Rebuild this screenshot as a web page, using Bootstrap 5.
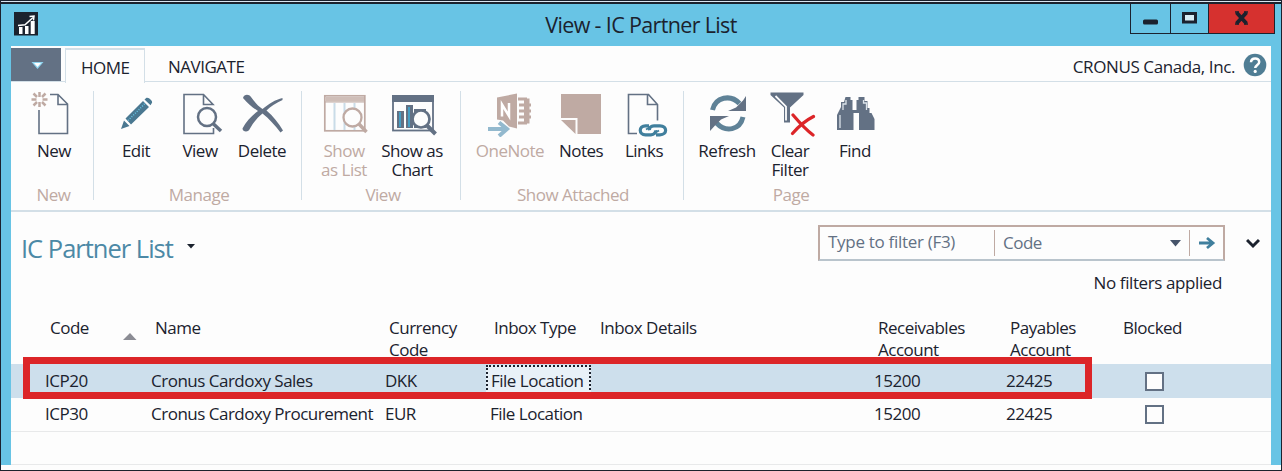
<!DOCTYPE html>
<html lang="en">
<head>
<meta charset="utf-8">
<meta name="viewport" content="width=device-width, initial-scale=1">
<title>View - IC Partner List</title>
<link rel="stylesheet" href="https://cdn.jsdelivr.net/npm/bootstrap@5.3.0/dist/css/bootstrap.min.css">
<style>
:root{--ink:#1b222e;--slate:#637184;--dim:#bfaaa3;--sky:#68c4e5;--rule:#d3dfe7;--pick:#cddfec;--alert:#dc2528}
body{font-family:"Open Sans","Noto Sans",sans-serif;font-size:17px;line-height:20px;letter-spacing:-.5px;color:var(--ink);background:#fdfdfd;overflow:hidden}
.window{height:471px;border:1px solid var(--ink);border-bottom-width:1px}
.topline{height:3px;background:#d8e4f0;border-bottom:2px solid var(--ink);flex:none}
.titlebar{height:42px;background:var(--sky);flex:none}
.titlebar h1{font-size:21.5px;line-height:41px;letter-spacing:-.65px;padding-right:0}
.logo{left:13px;top:8px}
.controls{right:6px;top:0;height:30px;border:1px solid var(--ink);border-top:0}
.controls button{border:0;background:none;padding:0;border-left:1px solid var(--ink);height:29px;display:block}
.controls button:first-child{border-left:0}
.controls .quit{background:#d6312f}
.body-frame{border:solid var(--sky);border-width:0 10px;height:419px;flex:none}
.tabs{height:36px;border-bottom:1px solid var(--rule)}
.tabs .app-menu{width:50px;height:33px;margin-top:2px;background:var(--slate);border:0;padding:0}
.tab-item{height:34px;line-height:38px;margin-top:2px}
.tab-item.current{width:80px;margin-left:4px;height:35px;border:1px solid var(--rule);border-width:2px 1px 0;background:#fdfdfd;line-height:35px;padding-left:15px}
.ribbon{height:130px;border-bottom:2px solid var(--rule);padding-top:9px}
.group{height:109px;border-right:1px solid var(--rule);position:relative}
.group:last-child{border:0}
.tool{border:0;background:none;padding:0;color:inherit;letter-spacing:inherit;line-height:19px;display:flex;flex-direction:column;align-items:center;height:93px;flex:none;white-space:nowrap}
.tool svg{margin-bottom:4px;display:block}
.tool.off,.group-name{color:var(--dim)}
.group-name{height:16px;line-height:22px;text-align:center}
.page-head{height:101px;padding:0 0 0 10px}
.page-head h2{font-size:25.5px;line-height:30px;letter-spacing:-1px;color:#4c89a6;margin-top:21px}
.filter{width:407px;height:36px;border:2px solid var(--dim);border-bottom-color:#b9c4cc;margin-top:13px;color:var(--slate)}
.filter .cell{height:26px;line-height:26px}
.cell+.cell{border-left:1px solid var(--dim)}
.grid-wrap{position:relative}
.partners{table-layout:fixed;width:1260px;border-collapse:collapse}
.partners th{font-weight:400;height:51px;padding:4px 0 0 8px;line-height:22px;vertical-align:top}
.partners td{padding:0 0 0 4px;line-height:20px;white-space:nowrap}
.partners th:first-child{padding-left:39px;position:relative}
.partners td:first-child{padding-left:34px}
.partners tr.picked td{background:var(--pick);height:34px}
.partners tr.normal td{height:33px;border-bottom:1px solid #e8e9ea}
.sort{position:absolute;left:112px;top:19px}
.focus-cell{display:block;height:32px;line-height:27px;margin:0 0 0 -4px;padding-left:3px;width:105px;border:2px dotted var(--ink);border-bottom:0;background:#e8f1f8}
.tick{width:19px;height:19px;border:2px solid var(--slate);background:#fdfdfd;margin-left:26px;display:block;margin-top:1px}
.callout{position:absolute;left:12px;top:44px;width:1069px;height:42px;border:7px solid var(--alert)}
</style>
</head>
<body>
<main class="window d-flex flex-column">
  <div class="topline"></div>
  <header class="titlebar position-relative text-center">
    <svg class="logo position-absolute" width="24" height="24" viewBox="13 12 24 24"><path fill="#1b222e" d="M13 12h24v23.500h-24z"/><path fill="#fff" d="M18 27h3.500v7H18zM24 26h3.500v8H24zM29.700 21h4v13h-4z"/><path fill="none" stroke="#fff" stroke-width="1.500" d="M17 25.500l7-.8 8-7.200M28.500 16.500l4.500-.5-.5 4.500"/></svg>
    <h1 class="m-0 fw-normal">View - IC Partner List</h1>
    <div class="controls position-absolute d-flex">
      <button style="width:39px" aria-label="Minimize"><svg width="38" height="29" viewBox="0 0 38 29"><rect x="11" y="15.500" width="15" height="5" rx="1.500" fill="#1b222e"/></svg></button>
      <button style="width:38px" aria-label="Maximize"><svg width="37" height="29" viewBox="0 0 37 29"><rect x="12.500" y="9.500" width="12" height="8.500" fill="#d8edf5" stroke="#1b222e" stroke-width="3"/></svg></button>
      <button class="quit" style="width:66px" aria-label="Close"><svg width="65" height="29" viewBox="0 0 65 29"><path d="M27.500 8.500l10 11M37.500 8.500l-10 11" stroke="#1b222e" stroke-width="3.800"/><path d="M26 8h4M35 8h4M26 20h4M35 20h4" stroke="#1b222e" stroke-width="1.500"/></svg></button>
    </div>
  </header>
  <div class="body-frame">
    <nav class="tabs d-flex">
      <button class="app-menu" aria-label="Application menu"><svg width="50" height="33"><path d="M20.500 14h12l-6 7z" fill="#8fd3ee"/><path d="M23 15h7l-3.500 4z" fill="#fff"/></svg></button>
      <div class="tab-item current" id="t-home">HOME</div>
      <div class="tab-item" style="padding-left:23px" id="t-nav">NAVIGATE</div>
      <div class="ms-auto d-flex" style="padding-right:4px"><span class="tab-item" style="padding-right:8px;letter-spacing:-.4px">CRONUS Canada, Inc.</span>
      <svg style="margin-top:7px" width="24" height="24" viewBox="0 0 24 24"><circle cx="12" cy="12" r="11.300" fill="#4f7d94"/><path d="M8 9.200c.2-5 8.200-5 8.200-.3 0 3-4 3-4 6.200" fill="none" stroke="#fff" stroke-width="2.500"/><circle cx="12.200" cy="18.400" r="1.600" fill="#fff"/></svg></div>
    </nav>
    <section class="ribbon d-flex">
      <div class="group" style="width:83px"><div class="d-flex" style="padding-left:13px">
        <button class="tool" style="width:60px"><svg width="60" height="46" viewBox="24 91 60 46"><path d="M39 110v23.500h28.500v-29.500l-9.500-9.500H50M58 95v9.500h9.500" fill="none" stroke="#637184" stroke-width="1.600"/><g stroke="#bfaaa3" stroke-width="2.500"><path d="M39.500 92v5M39.500 102v5M31.500 99.500h5M42.500 99.500h5M33.500 93.500l3.500 3.500M45.500 105.500l-3.500-3.500M45.500 93.500l-3.500 3.500M33.500 105.500l3.500-3.500"/></g></svg>New</button></div>
        <div class="group-name" style="padding-left:3px">New</div></div>
      <div class="group" style="width:208px"><div class="d-flex" style="padding-left:12px">
        <button class="tool" style="width:60px"><svg width="60" height="46" viewBox="106 91 60 46"><path fill="#4a7891" d="M121 129l3-8.500 5.500 5.500zM125.500 118.500l17.500-17.500 6 6L131 124.500zM144.500 99.500l2-1.700c2-1 6.500 3 5.500 5l-1.500 2.500z"/><path d="M128 120.500L145 103.500" stroke="#68c4e5" stroke-width="1.500" stroke-dasharray="1 1.500"/></svg>Edit</button>
        <button class="tool" style="width:68px"><svg width="68" height="46" viewBox="166 91 68 46"><path d="M213.500 128v5.500h-29.500v-39h19.500l9.500 10h-9.500v-10" fill="none" stroke="#637184" stroke-width="1.600"/><circle cx="207" cy="117" r="9" fill="#fdfdfd" stroke="#637184" stroke-width="2.500"/><path d="M213 123.500l8 7.500" stroke="#637184" stroke-width="3.500"/></svg>View</button>
        <button class="tool" style="width:56px"><svg width="56" height="46" viewBox="234 91 56 46"><path fill="#637184" d="M243 98c1-4 6-4 8-1 3.500 5 7 9 11.500 12 6-5 13-9.500 20-11v2c-6 2.500-12 6.500-16 10.500 7 6 12 12.500 16.500 20l-2.500 2c-5.500-7-11-13.500-18-19-5 4-9.500 9.500-12.500 15-1.500 4.500-7.500 3.500-7.500 0 3.500-7 9.500-13 15.500-17.500-6-4-10-7-15-13z"/></svg>Delete</button></div>
        <div class="group-name" style="padding-left:3px">Manage</div></div>
      <div class="group" style="width:159px"><div class="d-flex" style="padding-left:8px">
        <button class="tool off" style="width:68px"><svg width="68" height="46" viewBox="310 91 68 46"><rect x="324.800" y="95.800" width="40" height="35" fill="none" stroke="#bfaaa3" stroke-width="1.700"/><path fill="#cfbeb8" d="M325.500 97h38.500v4.500h-38.500z"/><path d="M325 102h40" stroke="#bfaaa3"/><path d="M334.500 103v27M344.500 103v27M354.500 103v27" stroke="#c9dce8" stroke-width="2"/><circle cx="352.500" cy="117.500" r="9" fill="#fdfdfd" stroke="#bfaaa3" stroke-width="2.300"/><path d="M359 124l7.500 8" stroke="#bfaaa3" stroke-width="3.500"/></svg>Show<br>as List</button>
        <button class="tool" style="width:68px"><svg width="68" height="46" viewBox="378 91 68 46"><rect x="393" y="96" width="40" height="34.500" fill="none" stroke="#637184" stroke-width="1.800"/><path fill="#637184" d="M392 95h42v7h-42zM397 111h7v17h-7zM406 105h7v23h-7zM414 109h12v19h-12z"/><path d="M400 112v15M409 107v20" stroke="#459ec4" stroke-width="2"/><circle cx="421" cy="119" r="8.500" fill="#fdfdfd" stroke="#637184" stroke-width="2.700"/><path d="M427 125.500l8.500 8.500" stroke="#637184" stroke-width="4"/></svg>Show as<br>Chart</button></div>
        <div class="group-name" style="padding-left:4px">View</div></div>
      <div class="group" style="width:223px"><div class="d-flex" style="padding-left:14px">
        <button class="tool off" style="width:70px"><svg width="70" height="46" viewBox="475 91 70 46"><path fill="#bfaaa3" d="M497 97.500l20-4v35l-8-2-6-6-6-1z"/><path d="M502 116.500v-12l7 11.500v-13" fill="none" stroke="#fff" stroke-width="2.500"/><path d="M518 99h7.500v24H518M528 98.500v25M519 105h12M519 111h12M519 117h12" fill="none" stroke="#bfaaa3" stroke-width="3"/><path d="M488 129h17M499 122.500l8 6.500-8 7" fill="none" stroke="#93b9ce" stroke-width="4"/></svg>OneNote</button>
        <button class="tool" style="width:72px"><svg width="72" height="46" viewBox="545 91 72 46"><path fill="#bfaaa3" d="M561 94h40v40h-23.500v-16H561zM561 120h14.500v14z"/></svg>Notes</button>
        <button class="tool" style="width:54px"><svg width="54" height="46" viewBox="617 91 54 46"><path d="M637 133.500h-8.500v-39h20l9 10v16M647.500 95v9.500h10" fill="none" stroke="#637184" stroke-width="1.600"/><g fill="none" stroke="#407f9d" stroke-width="3.200"><path d="M649 125.800h-3.500c-7 0-7 9 0 9h5.500c3 0 5-2 4.500-4.500"/><path d="M656 134.800h4c7.500 0 7.500-9 0-9h-6c-3 0-5 2-4.500 4.500"/><path d="M646 129.500l7-4M652 134.500l7-4" stroke-width="2"/></g></svg>Links</button></div>
        <div class="group-name" style="padding-left:2px">Show Attached</div></div>
      <div class="group" style="width:213px"><div class="d-flex" style="padding-left:13px">
        <button class="tool" style="width:60px"><svg width="60" height="46" viewBox="697 91 60 46"><g fill="none" stroke="#5f8297" stroke-width="5"><path d="M712.500 110c3-13 18-16 27-6.500"/><path d="M743 117c-3 13-17 16-26.500 6"/></g><path fill="#637184" d="M746 96v15h-18l8-3.500 7-7zM710 131v-15h19l-8 3.500-6 6z"/></svg>Refresh</button>
        <button class="tool" style="width:66px"><svg width="66" height="46" viewBox="757 91 66 46"><path fill="#637184" d="M770.500 92.500h33V95L790 107.500v15h-6v-15L770.500 95z"/><path d="M775.500 96l10.500 10.500V120.500" fill="none" stroke="#fdfdfd" stroke-width="1.800"/><path d="M793 115c6 7 12 14 20 20M813.500 116.500c-8 4-15 10-21 17" fill="none" stroke="#dc2528" stroke-width="3.200" stroke-linecap="round"/></svg>Clear<br>Filter</button>
        <button class="tool" style="width:64px"><svg width="64" height="46" viewBox="823 91 64 46"><path fill="#637184" d="M845.500 97h5v3h2v10h4v-10h2v-3h6v4h3v7h2v5h2l3 6v11h-15.500v-17h-5.500v17H837v-15l4-8v-5h3z"/><path d="M846 100v4h-3v6M863.500 100v3h3v7M840 115v13" stroke="#dce3ea" stroke-width="1.300" fill="none"/></svg>Find</button></div>
        <div class="group-name" style="padding-left:1px">Page</div></div>
    </section>
    <section class="page-head d-flex">
      <h2 class="mb-0 fw-normal">IC Partner List</h2>
      <svg style="margin:31px 0 0 14px" width="9" height="7"><path d="M0 1h8l-4 4.500z" fill="#1b222e"/></svg>
      <div class="ms-auto d-flex">
        <div>
          <div class="filter d-flex align-items-center">
            <div class="cell" style="width:174px;padding-left:8px;line-height:23px;letter-spacing:-.3px">Type to filter (F3)</div>
            <div class="cell d-flex align-items-center justify-content-between" style="width:195px;padding:0 8px"><span>Code</span><svg width="11" height="7"><path d="M0 0h11L5.500 6.500z" fill="#46546a"/></svg></div>
            <div class="cell d-flex align-items-center justify-content-center flex-fill"><svg width="18" height="14"><path d="M1 7h14M9 2l6 5-6 5" fill="none" stroke="#407f9d" stroke-width="2.800"/></svg></div>
          </div>
          <div class="text-end" style="padding:12px 3px 0 0;letter-spacing:-.4px">No filters applied</div>
        </div>
        <svg style="margin:26px 11px 0 21px" width="14" height="11"><path d="M1 2l6 6 6-6" fill="none" stroke="#1b222e" stroke-width="3"/></svg>
      </div>
    </section>
    <div class="grid-wrap">
      <table class="partners">
        <colgroup><col style="width:136px"><col style="width:234px"><col style="width:105px"><col style="width:106px"><col style="width:278px"><col style="width:132px"><col style="width:113px"><col></colgroup>
        <thead><tr><th>Code<svg class="sort" width="14" height="8"><path d="M0 8l7-7 6.500 7z" fill="#8b8c94"/></svg></th><th>Name</th><th>Currency<br>Code</th><th>Inbox Type</th><th>Inbox Details</th><th>Receivables<br>Account</th><th>Payables<br>Account</th><th>Blocked</th></tr></thead>
        <tbody>
          <tr class="picked"><td>ICP20</td><td>Cronus Cardoxy Sales</td><td>DKK</td><td><span class="focus-cell">File Location</span></td><td></td><td>15200</td><td>22425</td><td><span class="tick"></span></td></tr>
          <tr class="normal"><td>ICP30</td><td>Cronus Cardoxy Procurement</td><td>EUR</td><td>File Location</td><td></td><td>15200</td><td>22425</td><td><span class="tick"></span></td></tr>
          <tr class="normal"><td></td><td></td><td></td><td></td><td></td><td></td><td></td><td></td></tr>
        </tbody>
      </table>
      <div class="callout"></div>
    </div>
  </div>
</main>
<script src="https://cdn.jsdelivr.net/npm/bootstrap@5.3.0/dist/js/bootstrap.bundle.min.js"></script>
</body>
</html>
